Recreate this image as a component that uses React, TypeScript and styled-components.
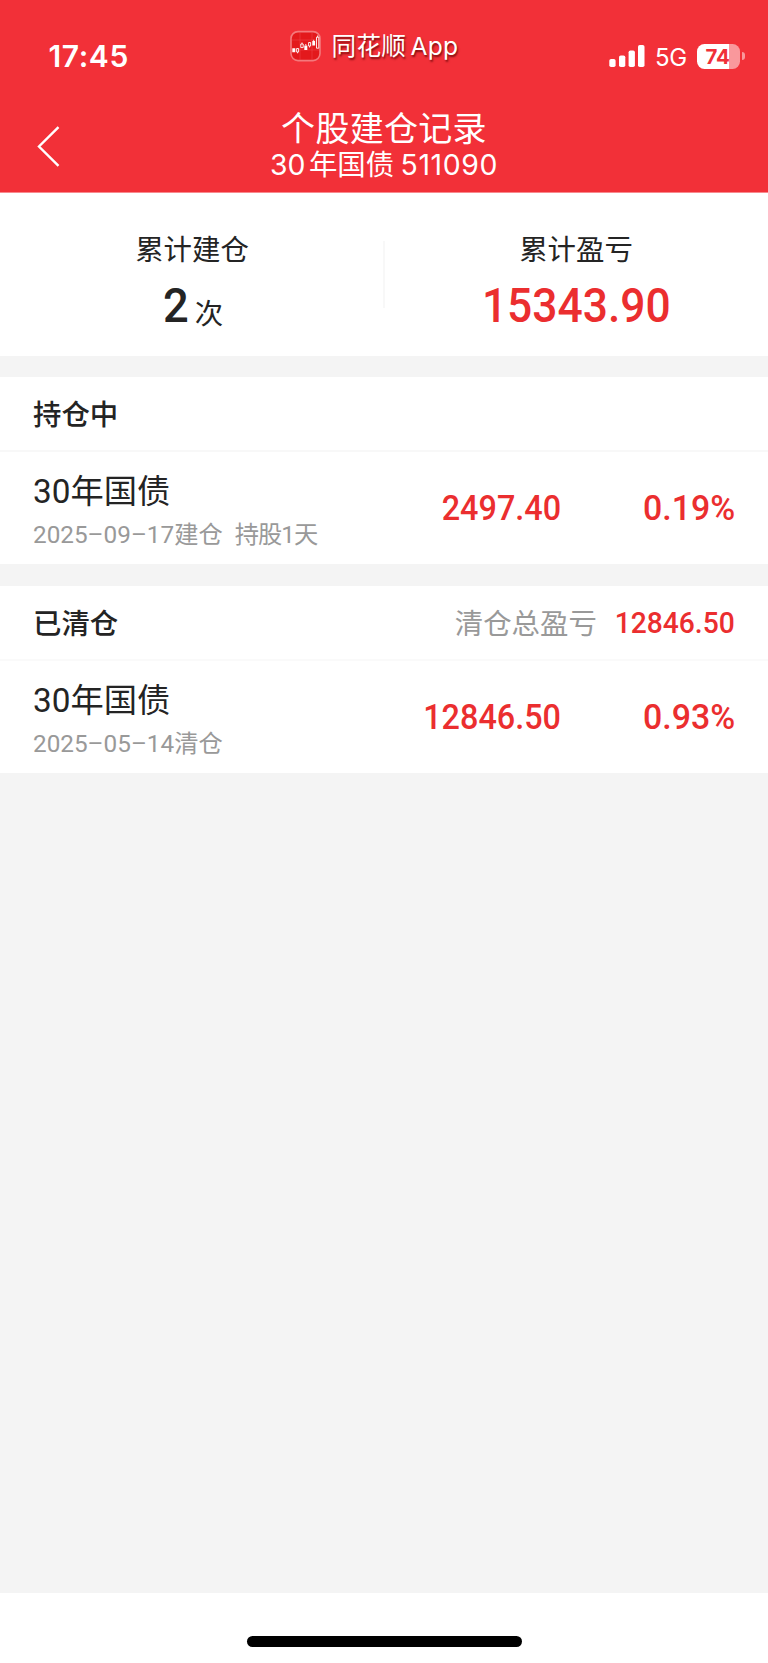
import React from 'react';
import styled, { createGlobalStyle } from 'styled-components';

const RED = '#f23038';
const NUM_RED = '#eb2e2f';

const GlobalStyle = createGlobalStyle`
  * { box-sizing: border-box; }
  body { margin: 0; background: #f4f4f4; }
`;

const Screen = styled.div`
  display: flex;
  flex-direction: column;
  width: 768px;
  height: 1663px;
  overflow: hidden;
  background: #f4f4f4;
  color: #242424;
  font-family: Roboto, 'Noto Sans CJK SC', sans-serif;
`;

const Header = styled.header`
  height: 193px;
  flex: none;
  background: ${RED};
  border-bottom: 1px solid #f8898e;
  color: #fff;
  font-family: Inter, 'Noto Sans CJK SC', sans-serif;
`;

const StatusBar = styled.div`
  display: grid;
  grid-template-columns: 290px 1fr auto;
  height: 110px;
  padding-right: 23px;
`;

const Clock = styled.div`
  padding: 37px 0 0 48.5px;
  font-size: 30px;
  line-height: 38px;
  font-weight: 600;
  letter-spacing: 0.6px;
`;

const AppBadge = styled.div`
  display: flex;
  align-items: center;
  gap: 9.5px;
  height: 32px;
  margin-top: 30px;
  font-size: 24.6px;
  line-height: 32px;
  white-space: nowrap;
  text-shadow: 1px 2px 2px rgba(90, 0, 0, 0.75);
`;

const AppName = styled.span`
  letter-spacing: 0.3px;
  word-spacing: -3px;
`;

const Indicators = styled.div`
  display: flex;
  align-items: center;
  height: 26px;
  margin-top: 43px;
`;

const Network = styled.span`
  width: 42px;
  margin-left: 10px;
  padding-top: 3px;
  font-size: 24px;
  line-height: 26px;
  letter-spacing: -0.4px;
`;

const Battery = styled.div`
  width: 43px;
  height: 25px;
  border-radius: 7.5px;
  background: linear-gradient(90deg, #fff 31.5px, #f9989c 31.5px);
  color: #f03038;
  font-size: 20.5px;
  line-height: 25px;
  font-weight: 700;
  text-align: center;
  letter-spacing: -0.2px;
  padding-right: 2px;
`;

const BatteryTip = styled.div`
  width: 3px;
  height: 8px;
  margin-left: 2px;
  border-radius: 0 4px 4px 0;
  background: #f9989c;
`;

const NavBar = styled.div`
  display: grid;
  grid-template-columns: 100px 1fr 100px;
  text-align: center;
`;

const BackIcon = styled.svg`
  width: 24px;
  height: 42px;
  margin: 15px 0 0 36px;
`;

const Title = styled.h1`
  margin: 0;
  font-size: 34px;
  line-height: 37px;
  font-weight: 400;
  letter-spacing: 0.3px;
`;

const Subtitle = styled.div`
  font-size: 28.4px;
  line-height: 35px;
  word-spacing: -4.5px;
`;

const Code = styled.span`
  margin-left: 3px;
  letter-spacing: 0.6px;
`;

const Summary = styled.section`
  display: flex;
  height: 163px;
  flex: none;
  background: #fff;
`;

const SummaryCell = styled.div`
  flex: 1;
  display: flex;
  flex-direction: column;
  align-items: center;
  padding-top: 38px;
`;

const SummaryLabel = styled.div`
  font-size: 28.4px;
  line-height: 40px;
`;

const SummaryValue = styled.div`
  display: flex;
  gap: 6px;
  height: 48px;
  margin-top: 11px;
  line-height: 48px;
`;

const Divider = styled.div`
  width: 2px;
  height: 67px;
  margin: 48px -1px 0;
  background: #f8f8f8;
`;

const Unit = styled.span`
  padding-top: 6px;
  font-size: 28.4px;
  line-height: 54px;
`;

const Figure = styled.span<{ $size: number; $scale?: number; $origin?: string; $dark?: boolean }>`
  display: inline-block;
  font-size: ${p => p.$size}px;
  font-weight: 500;
  color: ${p => (p.$dark ? '#242424' : NUM_RED)};
  transform: scaleX(${p => p.$scale ?? 0.925});
  transform-origin: ${p => p.$origin ?? 'right'} center;
`;

const Section = styled.section<{ $gap: number }>`
  flex: none;
  margin-top: ${p => p.$gap}px;
  background: #fff;
`;

const SectionHead = styled.div<{ $line: string }>`
  display: flex;
  align-items: center;
  justify-content: space-between;
  height: 75px;
  padding: 1px 33px 0 33px;
  border-bottom: 2px solid ${p => p.$line};
  font-size: 28.4px;
`;

const SectionTitle = styled.h2`
  margin: 0;
  padding-top: 4px;
  font-size: inherit;
  line-height: 40px;
  font-weight: 500;
`;

const Total = styled.div`
  display: flex;
  align-items: center;
  gap: 10.5px;
  line-height: 40px;
  color: #999;
`;

const TotalLabel = styled.span`
  padding-top: 4px;
`;

const Record = styled.div`
  display: grid;
  grid-template-columns: 1fr 200px 174px;
  align-items: center;
  height: 112px;
  padding: 0 33px;
  text-align: right;
`;

const RecordInfo = styled.div`
  padding-top: 6px;
  text-align: left;
  white-space: pre;
`;

const RecordName = styled.div`
  font-size: 33.3px;
  line-height: 44px;
`;

const RecordNote = styled.div`
  font-size: 24.3px;
  line-height: 34px;
  margin-top: 4px;
  color: #999;
`;

const HeldFor = styled.span`
  margin-left: 12px;
  letter-spacing: -1px;
`;

const HomeArea = styled.footer`
  display: flex;
  justify-content: center;
  height: 70px;
  flex: none;
  margin-top: auto;
  padding-top: 43px;
  background: #fff;
`;

const HomeIndicator = styled.div`
  width: 275px;
  height: 10.5px;
  border-radius: 6px;
  background: #000;
`;

const AppIcon = () => (
  <svg width="32" height="32" viewBox="0 0 32 32" fill="none">
    <rect x="1" y="1.6" width="29" height="29" rx="7" fill="#e3191c" stroke="#f4797c" strokeWidth="1.6" />
    <path d="M2 10h27M2 20h27M10 2v28M22 2v28" stroke="#ee4a4c" strokeWidth="0.5" />
    <path d="M2.3 18.3h3v4h-3zM14.3 15.5h3v4.6h-3zM22.3 11h2.8v4.5h-2.8z" fill="#fff" />
    <path
      d="M6.6 18.5h2v3.5h-2zM7.6 22v1.3M10.8 14h2.4v3.6h-2.4zM12 12.5V14M18.6 12.5h2v3.5h-2zM19.6 16v1.5M26.5 7.2h2.3v11h-2.3zM27.6 5.5v1.7M15.8 14v1.5M23.7 9.8V11"
      stroke="#fff"
      strokeWidth="0.9"
    />
  </svg>
);

const SignalIcon = () => (
  <svg width="36" height="24" viewBox="0 0 36 24" fill="#fff">
    <rect x="0.3" y="15" width="6.3" height="8" rx="1.8" />
    <rect x="10" y="11.5" width="6.3" height="11.5" rx="1.8" />
    <rect x="19.6" y="6.5" width="6.3" height="16.5" rx="1.8" />
    <rect x="29" y="1" width="6.5" height="22" rx="1.8" />
  </svg>
);

interface HoldingProps {
  name: string;
  note: string;
  held?: string;
  profit: string;
  rate: string;
}

const Holding = ({ name, note, held, profit, rate }: HoldingProps) => (
  <Record>
    <RecordInfo>
      <RecordName>{name}</RecordName>
      <RecordNote>
        {note}
        {held && <HeldFor>{held}</HeldFor>}
      </RecordNote>
    </RecordInfo>
    <div><Figure $size={35}>{profit}</Figure></div>
    <div><Figure $size={35} $scale={0.968}>{rate}</Figure></div>
  </Record>
);

export default function App() {
  return (
    <Screen>
      <GlobalStyle />
      <Header>
        <StatusBar>
          <Clock>17:45</Clock>
          <AppBadge>
            <AppIcon />
            <AppName>同花顺 App</AppName>
          </AppBadge>
          <Indicators>
            <SignalIcon />
            <Network>5G</Network>
            <Battery>74</Battery>
            <BatteryTip />
          </Indicators>
        </StatusBar>
        <NavBar>
          <BackIcon viewBox="0 0 24 42" fill="none" stroke="#fff" strokeWidth="2.4">
            <path d="M22.5 2.2 3 21.5 22.5 40.8" />
          </BackIcon>
          <div>
            <Title>个股建仓记录</Title>
            <Subtitle>30 年国债 <Code>511090</Code></Subtitle>
          </div>
        </NavBar>
      </Header>

      <Summary>
        <SummaryCell>
          <SummaryLabel>累计建仓</SummaryLabel>
          <SummaryValue>
            <Figure $size={49} $dark $origin="right">2</Figure>
            <Unit>次</Unit>
          </SummaryValue>
        </SummaryCell>
        <Divider />
        <SummaryCell>
          <SummaryLabel>累计盈亏</SummaryLabel>
          <SummaryValue>
            <Figure $size={49} $scale={0.905} $origin="center">15343.90</Figure>
          </SummaryValue>
        </SummaryCell>
      </Summary>

      <Section $gap={21}>
        <SectionHead $line="#f8f8f8">
          <SectionTitle>持仓中</SectionTitle>
        </SectionHead>
        <Holding name="30年国债" note="2025–09–17建仓" held="持股1天" profit="2497.40" rate="0.19%" />
      </Section>

      <Section $gap={22}>
        <SectionHead $line="#fafafa">
          <SectionTitle>已清仓</SectionTitle>
          <Total>
            <TotalLabel>清仓总盈亏</TotalLabel>
            <Figure $size={30} $scale={0.94}>12846.50</Figure>
          </Total>
        </SectionHead>
        <Holding name="30年国债" note="2025–05–14清仓" profit="12846.50" rate="0.93%" />
      </Section>

      <HomeArea>
        <HomeIndicator />
      </HomeArea>
    </Screen>
  );
}
